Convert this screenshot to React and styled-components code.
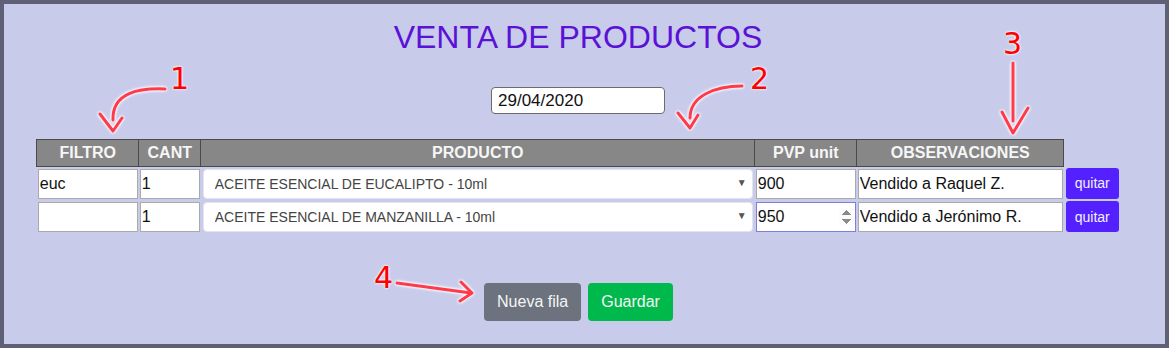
import React from 'react';
import styled, { createGlobalStyle } from 'styled-components';

const GlobalStyle = createGlobalStyle`
  html, body {
    margin: 0;
    padding: 0;
    background: #c8cbea;
  }
  * {
    box-sizing: border-box;
  }
`;

const Frame = styled.div`
  position: relative;
  width: 1169px;
  height: 348px;
  border: 4px solid #5f6075;
  background: #c8cbea;
  font-family: "Liberation Sans", Arial, sans-serif;
  overflow: hidden;
`;

const Content = styled.div`
  display: flex;
  flex-direction: column;
  align-items: center;
  padding-right: 13px;
`;

const Title = styled.h1`
  margin: 15px 0 0;
  font-size: 32px;
  line-height: 36px;
  font-weight: 400;
  color: #5a12d6;
`;

const DateInput = styled.input`
  margin-top: 32px;
  width: 174px;
  height: 27px;
  padding: 0 6px;
  border: 1px solid #6b6b6b;
  border-radius: 4px;
  background: #fff;
  font-family: inherit;
  font-size: 17px;
  color: #111;
  outline: none;
`;

const Table = styled.table`
  margin-top: 25px;
  border-collapse: collapse;
  table-layout: fixed;
`;

const Th = styled.th`
  height: 27px;
  padding: 0 4px;
  background: ${(p) => (p.$blank ? 'transparent' : '#878787')};
  border: ${(p) => (p.$blank ? 'none' : '1px solid #4a4a4a')};
  color: #f6f6f6;
  font-size: 16px;
  font-weight: 700;
  text-align: center;
`;

const Td = styled.td`
  padding: 2px 1px 1px;
  vertical-align: top;
`;

const TextInput = styled.input`
  display: block;
  width: 100%;
  height: 30px;
  margin: 0;
  padding: 0 1px;
  border: 1px solid ${(p) => (p.$focused ? '#7d7ee0' : '#aaaaaa')};
  background: #fff;
  font-family: inherit;
  font-size: 16px;
  color: #111;
  outline: none;

  &::-webkit-inner-spin-button {
    opacity: ${(p) => (p.$focused ? 1 : 0)};
  }
`;

const SelectWrap = styled.div`
  position: relative;
  margin: 0 1px;
`;

const Select = styled.select`
  display: block;
  width: 100%;
  height: 30px;
  padding: 0 20px 0 11px;
  border: 1px solid #e4e4ee;
  border-radius: 4px;
  background: #fff;
  appearance: none;
  font-family: inherit;
  font-size: 14px;
  color: #444;
  outline: none;
`;

const Caret = styled.span`
  position: absolute;
  right: 6px;
  top: 8px;
  font-size: 10px;
  color: #555;
  pointer-events: none;
`;

const RemoveButton = styled.button`
  display: block;
  width: 53px;
  height: 31px;
  margin: -1px 0 0 1px;
  padding: 0;
  border: none;
  border-radius: 3px;
  background: #5421fe;
  color: #f2f0ff;
  font-family: inherit;
  font-size: 14px;
`;

const Actions = styled.div`
  display: flex;
  gap: 7px;
  margin-top: 50px;
  padding-left: 1px;
`;

const ActionButton = styled.button`
  height: 38px;
  padding: 0 13px;
  border: none;
  border-radius: 4px;
  background: ${(p) => p.$bg};
  color: #f5f5f5;
  font-family: inherit;
  font-size: 16px;
`;

const Arrows = styled.svg`
  position: absolute;
  left: -4px;
  top: -4px;
  pointer-events: none;
  filter: drop-shadow(0 0 1.5px #fff) drop-shadow(0 0 1px #fff);
`;

const Mark = styled.span`
  position: absolute;
  left: ${(p) => p.$x}px;
  top: ${(p) => p.$y}px;
  font-family: "DejaVu Sans", sans-serif;
  font-size: 30px;
  line-height: 30px;
  color: #ff0000;
  text-shadow: 0 0 3px #fff, 0 0 2px #fff;
`;

const rows = [
  { filtro: 'euc', cant: '1', producto: 'ACEITE ESENCIAL DE EUCALIPTO - 10ml', pvp: '900', obs: 'Vendido a Raquel Z.' },
  { filtro: '', cant: '1', producto: 'ACEITE ESENCIAL DE MANZANILLA - 10ml', pvp: '950', obs: 'Vendido a Jerónimo R.', focused: true },
];

const arrowStroke = {
  fill: 'none',
  stroke: '#ff3b4b',
  strokeWidth: 3,
  strokeLinecap: 'round',
  strokeLinejoin: 'round',
};

export default function App() {
  return (
    <>
      <GlobalStyle />
      <Frame>
        <Content>
          <Title>VENTA DE PRODUCTOS</Title>
          <DateInput type="text" defaultValue="29/04/2020" />
          <Table>
            <colgroup>
              <col style={{ width: 102 }} />
              <col style={{ width: 62 }} />
              <col style={{ width: 554 }} />
              <col style={{ width: 102 }} />
              <col style={{ width: 207 }} />
              <col style={{ width: 54 }} />
            </colgroup>
            <thead>
              <tr>
                <Th>FILTRO</Th>
                <Th>CANT</Th>
                <Th>PRODUCTO</Th>
                <Th>PVP unit</Th>
                <Th>OBSERVACIONES</Th>
                <Th $blank />
              </tr>
            </thead>
            <tbody>
              {rows.map((r, i) => (
                <tr key={i}>
                  <Td><TextInput type="text" defaultValue={r.filtro} /></Td>
                  <Td><TextInput type="text" defaultValue={r.cant} /></Td>
                  <Td>
                    <SelectWrap>
                      <Select defaultValue={r.producto}>
                        <option>{r.producto}</option>
                      </Select>
                      <Caret>▼</Caret>
                    </SelectWrap>
                  </Td>
                  <Td>
                    <TextInput type={r.focused ? 'number' : 'text'} defaultValue={r.pvp} $focused={r.focused} />
                  </Td>
                  <Td><TextInput type="text" defaultValue={r.obs} /></Td>
                  <Td><RemoveButton>quitar</RemoveButton></Td>
                </tr>
              ))}
            </tbody>
          </Table>
          <Actions>
            <ActionButton $bg="#6c737e">Nueva fila</ActionButton>
            <ActionButton $bg="#00b94c">Guardar</ActionButton>
          </Actions>
        </Content>

        <Arrows width="1169" height="348" viewBox="0 0 1169 348">
          <path d="M165 89 C 140 88, 112 92, 113 120" {...arrowStroke} />
          <path d="M100 114 L113 131 L122 118" {...arrowStroke} />
          <path d="M742 86 C 715 86, 690 96, 690 118" {...arrowStroke} />
          <path d="M678 113 L690 128 L698 115" {...arrowStroke} />
          <path d="M1013 63 L1013 121" {...arrowStroke} />
          <path d="M1002 112 L1013 133 L1028 108" {...arrowStroke} />
          <path d="M397 283 L471 293" {...arrowStroke} />
          <path d="M461 282 L472 293 L460 301" {...arrowStroke} />
        </Arrows>
        <Mark $x={166} $y={60}>1</Mark>
        <Mark $x={746} $y={60}>2</Mark>
        <Mark $x={999} $y={25}>3</Mark>
        <Mark $x={370} $y={259}>4</Mark>
      </Frame>
    </>
  );
}
